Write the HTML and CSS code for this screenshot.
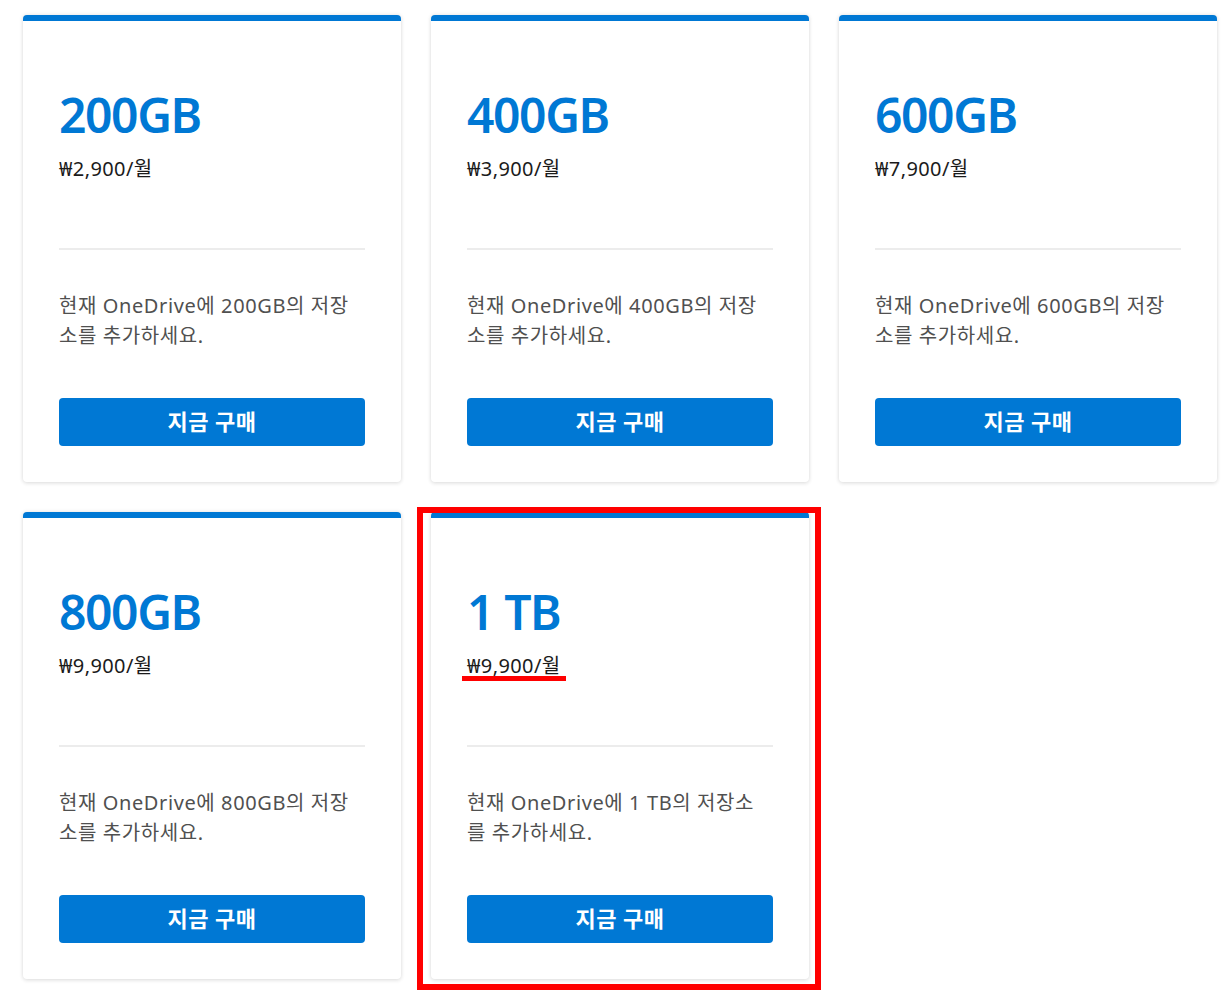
FILE: index.html
```html
<!DOCTYPE html>
<html lang="ko">
<head>
  <meta charset="UTF-8">
  <title>OneDrive 저장소 추가</title>
  <link rel="stylesheet" href="styles.css">
</head>
<body>

  <main class="plans">
    <section class="plan">
      <h2 class="plan-size">200GB</h2>
      <p class="plan-price">₩2,900/월</p>
      <hr class="plan-divider">
      <p class="plan-desc">현재 OneDrive에 200GB의 저장<br>소를 추가하세요.</p>
      <button class="plan-buy" type="button">지금 구매</button>
    </section>

    <section class="plan">
      <h2 class="plan-size">400GB</h2>
      <p class="plan-price">₩3,900/월</p>
      <hr class="plan-divider">
      <p class="plan-desc">현재 OneDrive에 400GB의 저장<br>소를 추가하세요.</p>
      <button class="plan-buy" type="button">지금 구매</button>
    </section>

    <section class="plan">
      <h2 class="plan-size">600GB</h2>
      <p class="plan-price">₩7,900/월</p>
      <hr class="plan-divider">
      <p class="plan-desc">현재 OneDrive에 600GB의 저장<br>소를 추가하세요.</p>
      <button class="plan-buy" type="button">지금 구매</button>
    </section>

    <section class="plan">
      <h2 class="plan-size">800GB</h2>
      <p class="plan-price">₩9,900/월</p>
      <hr class="plan-divider">
      <p class="plan-desc">현재 OneDrive에 800GB의 저장<br>소를 추가하세요.</p>
      <button class="plan-buy" type="button">지금 구매</button>
    </section>

    <section class="plan plan-marked">
      <div class="mark-box"></div>
      <h2 class="plan-size">1 TB</h2>
      <p class="plan-price"><span class="mark-line"></span>₩9,900/월</p>
      <hr class="plan-divider">
      <p class="plan-desc">현재 OneDrive에 1 TB의 저장소<br>를 추가하세요.</p>
      <button class="plan-buy" type="button">지금 구매</button>
    </section>
  </main>

</body>
</html>
```

FILE: styles.css
```css
body {
  margin: 0;
  background-color: #ffffff;
  font-family: "Noto Sans", "Noto Sans CJK KR", sans-serif;
}

.plans {
  display: grid;
  grid-template-columns: repeat(3, 378px);
  column-gap: 30px;
  row-gap: 30px;
  padding: 15px 0 16px 23px;
}

.plan {
  position: relative;
  display: flex;
  flex-direction: column;
  padding: 0 36px 36px;
  background-color: white;
  border-top: 6px solid #0078d4;
  border-radius: 4px;
  box-shadow: 0 0 4px rgba(0,0,0,0.12), 0 2px 4px rgba(0,0,0,0.06);
}

.plan-size {
  margin: 65px 0 0;
  font-size: 48px;
  line-height: 58px;
  font-weight: 600;
  letter-spacing: -1.4px;
  color: #0078d4;
}

.plan-price {
  position: relative;
  margin: 10px 0 0;
  font-size: 20px;
  line-height: 30px;
  letter-spacing: 0.4px;
  color: #1b1b1b;
}

.plan-divider {
  margin: 64px 0 0;
  height: 2px;
  border: none;
  background-color: #ececec;
}

.plan-desc {
  margin: 41px 0 0;
  font-size: 20px;
  line-height: 30px;
  letter-spacing: 0.6px;
  color: #505050;
}

.plan-buy {
  margin-top: 47px;
  height: 48px;
  padding: 0 0 4px;
  border: none;
  border-radius: 4px;
  background-color: #0078d4;
  color: white;
  font-family: inherit;
  font-size: 22px;
  font-weight: 700;
  letter-spacing: 0.5px;
  cursor: pointer;
}

/* red annotation over the 1 TB card */
.mark-box {
  position: absolute;
  left: -14px;
  top: -11px;
  right: -12px;
  bottom: -11px;
  border: 6px solid #ff0000;
  pointer-events: none;
}

.mark-line {
  position: absolute;
  left: -5px;
  bottom: 0;
  width: 104px;
  height: 5px;
  background-color: #ff0000;
}
```
